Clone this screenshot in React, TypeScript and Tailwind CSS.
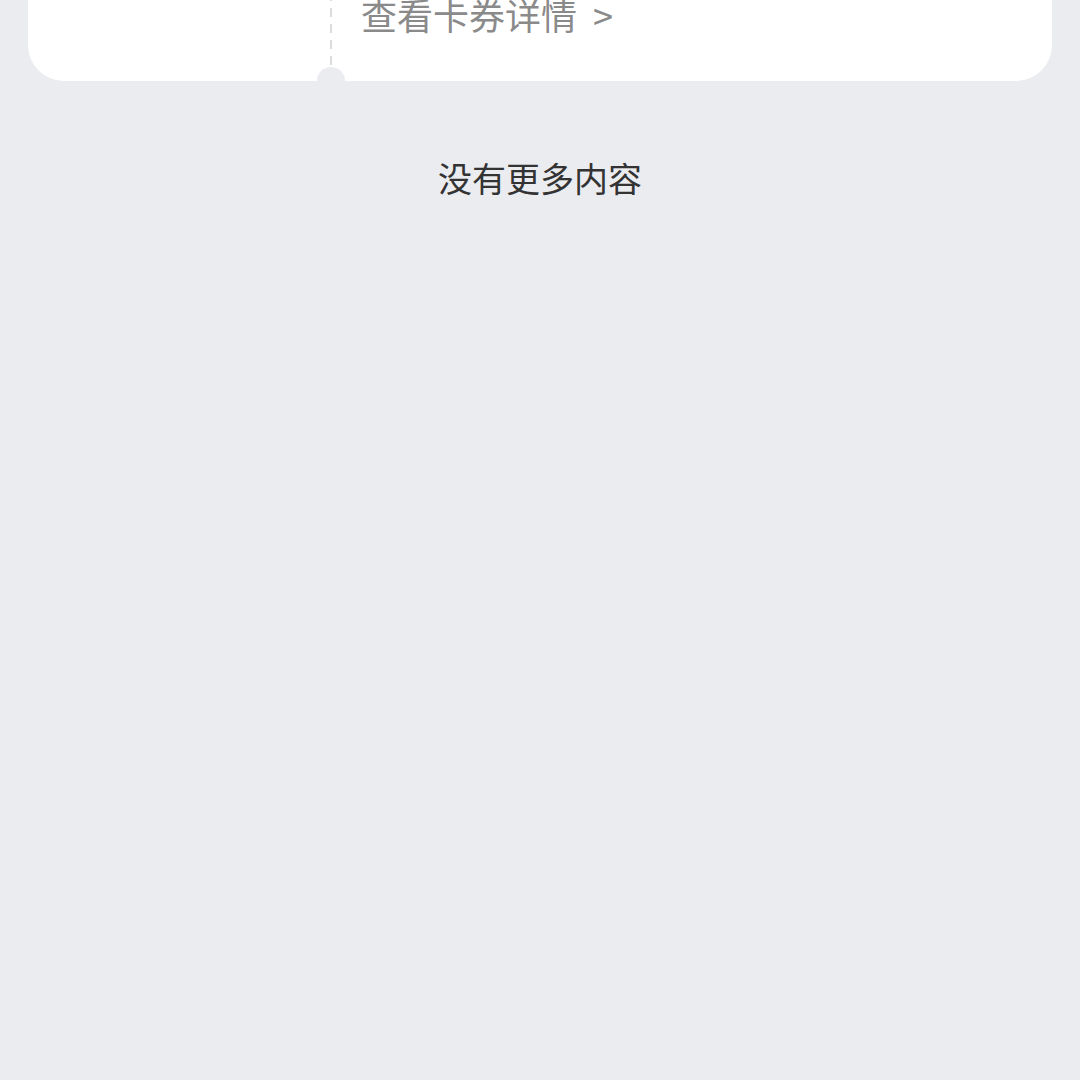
import React from "react";

export default function App() {
  return (
    <div className="min-h-screen overflow-hidden bg-[#ebecf0] font-['Noto_Sans_CJK_SC','Noto_Sans',sans-serif]">
      <div className="relative mx-[28px] -mt-[100px] flex h-[181px] rounded-[36px] bg-white">
        <div className="w-[302px] shrink-0" />
        <div className="mb-[16px] w-[2px] shrink-0 bg-[linear-gradient(to_bottom,transparent_7px,#dcdcdc_7px)] [background-size:2px_16px] bg-bottom bg-repeat-y" />
        <div className="flex flex-1 flex-col justify-end pb-[49px] pl-[29px]">
          <span className="text-[36px] leading-[36px] text-[#8a8a8a]">
            查看卡券详情<span className="ml-[16px]">&gt;</span>
          </span>
        </div>
        <div className="absolute bottom-[-14px] left-[289px] h-[28px] w-[28px] rounded-full bg-[#ebecf0]" />
      </div>
      <div className="mt-[80px] text-center text-[34px] leading-[34px] text-[#333333]">没有更多内容</div>
    </div>
  );
}
